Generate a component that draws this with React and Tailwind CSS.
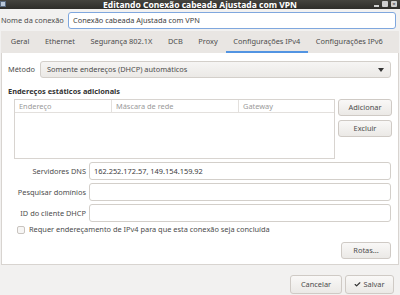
import { Check } from "lucide-react";

const font = { fontFamily: '"Noto Sans", "DejaVu Sans", sans-serif' };

const TABS = ["Geral", "Ethernet", "Segurança 802.1X", "DCB", "Proxy", "Configurações IPv4", "Configurações IPv6"];

function Btn({ children, className = "" }) {
  return (
    <div className={`flex items-center justify-center rounded-[3px] border border-[#cfcac5] bg-gradient-to-b from-[#f9f8f7] to-[#ebe9e6] text-[#4c4c4c] ${className}`}>
      {children}
    </div>
  );
}

function Field({ label, value }) {
  return (
    <div className="flex items-center h-[18px]">
      <div className="w-[81px] pr-[3px] text-right text-[#4c4c4c]">{label}</div>
      <div className="flex-1 h-full rounded-[3px] border border-[#d3cfca] bg-white flex items-center pl-[4px] text-[#3c3c3c]">{value}</div>
    </div>
  );
}

export default function App() {
  return (
    <div style={font} className="w-[400px] h-[295px] overflow-hidden bg-[#f2f1f0] text-[7.4px] leading-none whitespace-nowrap text-[#3c3c3c] flex flex-col">
      <div className="h-[9px] relative flex items-center justify-center bg-gradient-to-b from-[#45443f] to-[#2e2d2a]">
        <div className="absolute left-0 top-[1px] w-[6px] h-[6px] bg-[#b9c7d8] border border-[#5a6a80]" />
        <span className="text-white font-bold text-[8.5px] leading-[9px]">Editando Conexão cabeada Ajustada com VPN</span>
        <div className="absolute right-[3px] top-[1px] flex gap-[3px] items-center">
          <div className="w-[5px] h-[2px] bg-[#cfcfcf] mt-[3px]" />
          <div className="w-[6px] h-[6px] bg-[#cfcfcf] rounded-[1px]" />
          <div className="w-[6px] h-[6px] bg-[#cfcfcf] rounded-[1px] text-[#333] text-[6px] flex items-center justify-center">×</div>
        </div>
      </div>

      <div className="flex items-center mt-[3px] h-[17px]">
        <div className="w-[68px] pl-[1px] text-[#4c4c4c]">Nome da conexão</div>
        <div className="w-[328px] h-full rounded-[3px] border border-[#7fa7de] bg-white flex items-center pl-[4px]">Conexão cabeada Ajustada com VPN</div>
      </div>

      <div className="mt-[2px] mx-[1px] h-[22px] bg-[#e9e6e3] flex items-stretch pl-[2px]">
        {TABS.map((t, i) => (
          <div key={t} className={`px-[7.8px] flex items-center pt-[2px] text-[#4c4c4c] ${i === 5 ? "border-b-[2px] border-[#5294e2]" : "border-b-[2px] border-transparent"}`}>{t}</div>
        ))}
      </div>

      <div className="mx-[1px] h-[212px] bg-white border border-[#d8d4d0] border-t-0 flex flex-col px-[6px]">
        <div className="flex items-center mt-[8px] h-[17px]">
          <div className="w-[32px] text-[#4c4c4c]">Método</div>
          <div className="flex-1 h-full mr-[1px] rounded-[3px] border border-[#d3cfca] bg-gradient-to-b from-[#f6f5f4] to-[#ebe9e6] flex items-center justify-between pl-[6px] pr-[6px] text-[#4c4c4c]">
            <span>Somente endereços (DHCP) automáticos</span>
            <svg width="6" height="4" viewBox="0 0 6 4"><path d="M0 0h6L3 4z" fill="#333" /></svg>
          </div>
        </div>

        <div className="mt-[10px] font-bold text-[#333]">Endereços estáticos adicionais</div>

        <div className="flex mt-[4px] pl-[6px]">
          <div className="w-[321px] h-[60px] border border-[#d8d4d0] flex flex-col">
            <div className="h-[13px] flex border-b border-[#e3e0dd] text-[#9a9a9a]">
              <div className="w-[97px] pl-[4px] flex items-center border-r border-[#e3e0dd]">Endereço</div>
              <div className="w-[127px] pl-[4px] flex items-center border-r border-[#e3e0dd]">Máscara de rede</div>
              <div className="flex-1 pl-[4px] flex items-center">Gateway</div>
            </div>
          </div>
          <div className="ml-[3px] flex flex-col gap-[4px]">
            <Btn className="w-[54px] h-[17px]">Adicionar</Btn>
            <Btn className="w-[54px] h-[17px]">Excluir</Btn>
          </div>
        </div>

        <div className="mt-[3px] flex flex-col gap-[3px] pr-[1px]">
          <Field label="Servidores DNS" value="162.252.172.57, 149.154.159.92" />
          <Field label="Pesquisar domínios" value="" />
          <Field label="ID do cliente DHCP" value="" />
        </div>

        <div className="flex items-center mt-[3px] pl-[9px] h-[9px]">
          <div className="w-[8px] h-[8px] rounded-[2px] border border-[#c9c4bf] bg-[#f7f6f5]" />
          <span className="ml-[4px] text-[#4c4c4c]">Requer endereçamento de IPv4 para que esta conexão seja concluída</span>
        </div>

        <div className="flex justify-end mt-[8px] pr-[1px]">
          <Btn className="w-[50px] h-[17px]">Rotas...</Btn>
        </div>
      </div>

      <div className="flex justify-end gap-[3px] mt-[10px] pr-[6px]">
        <Btn className="w-[52px] h-[19px]">Cancelar</Btn>
        <Btn className="w-[49px] h-[19px] gap-[2px]"><Check size={7} strokeWidth={4} className="text-[#333]" />Salvar</Btn>
      </div>
    </div>
  );
}
